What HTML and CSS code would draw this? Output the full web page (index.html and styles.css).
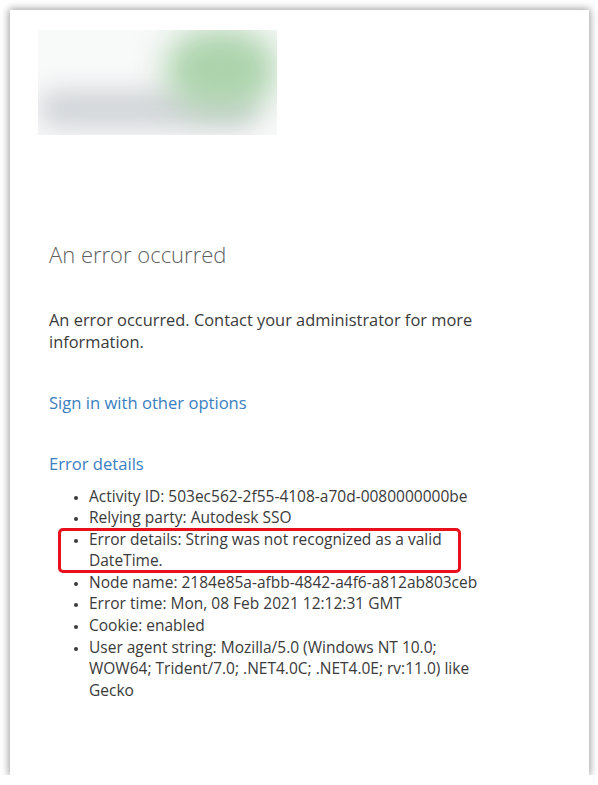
FILE: index.html
```html
<!DOCTYPE html>
<html lang="en">
<head>
    <meta charset="UTF-8">
    <meta name="viewport" content="width=device-width, initial-scale=1.0">
    <title>Sign In</title>
    <link rel="stylesheet" href="styles.css">
</head>
<body>
    <div class="card">
        <div class="logo">
            <div class="logo-band"></div>
            <div class="logo-mark"></div>
        </div>

        <div class="content">
            <h1 class="title">An error occurred</h1>
            <p class="message">An error occurred. Contact your administrator for more information.</p>

            <a class="link options" href="#">Sign in with other options</a>

            <div class="details">
                <a class="link" href="#">Error details</a>
                <ul class="detail-list">
                    <li>Activity ID: 503ec562-2f55-4108-a70d-0080000000be</li>
                    <li>Relying party: Autodesk SSO</li>
                    <li class="marked">Error details: String was not recognized as a valid DateTime.</li>
                    <li class="nowrap">Node name: 2184e85a-afbb-4842-a4f6-a812ab803ceb</li>
                    <li>Error time: Mon, 08 Feb 2021 12:12:31 GMT</li>
                    <li>Cookie: enabled</li>
                    <li>User agent string: Mozilla/5.0 (Windows NT 10.0; WOW64; Trident/7.0; .NET4.0C; .NET4.0E; rv:11.0) like Gecko</li>
                </ul>
            </div>
        </div>
    </div>
</body>
</html>
```

FILE: styles.css
```css
body {
    margin: 0;
    background-color: #fff;
    font-family: "Open Sans", "Noto Sans", sans-serif;
    color: #3a3a3a;
}
.card {
    margin: 10px 0 0 10px;
    width: 579px;
    height: 765px;
    box-sizing: border-box;
    background-color: #fff;
    box-shadow: 0 0 8px 1px rgba(0, 0, 0, 0.4);
    padding: 20px 0 0 28px;
}
.logo {
    position: relative;
    width: 239px;
    height: 105px;
    background-color: #f8f9f9;
    overflow: hidden;
}
.logo-band {
    position: absolute;
    left: 0;
    top: 60px;
    width: 220px;
    height: 38px;
    border-radius: 19px;
    background-color: #d2d5d9;
    filter: blur(12px);
}
.logo-mark {
    position: absolute;
    left: 128px;
    top: -2px;
    width: 110px;
    height: 84px;
    border-radius: 45%;
    background-color: #acd3ac;
    filter: blur(16px);
}
.content {
    width: 439px;
    padding-left: 11px;
}
.title {
    margin: 104px 0 0;
    font-size: 22px;
    font-weight: 300;
    color: #5f5f5f;
    line-height: 30px;
}
.message {
    margin: 40px 0 0;
    font-size: 16.4px;
    line-height: 22px;
}
.link {
    color: #3a80c0;
    text-decoration: none;
    font-size: 16.6px;
    line-height: 22px;
}
.options {
    display: block;
    margin-top: 39px;
}
.details {
    margin-top: 39px;
}
.detail-list {
    margin: 10.5px 0 0;
    padding-left: 40px;
    font-size: 15.5px;
    line-height: 21.6px;
}
.detail-list li {
    position: relative;
}
.detail-list li::marker {
    font-size: 12px;
}
.nowrap {
    white-space: nowrap;
}
.marked::before {
    content: "";
    position: absolute;
    left: -31px;
    top: -0.5px;
    width: 397px;
    height: 39px;
    border: 3px solid #e8101a;
    border-radius: 5px;
}
```
